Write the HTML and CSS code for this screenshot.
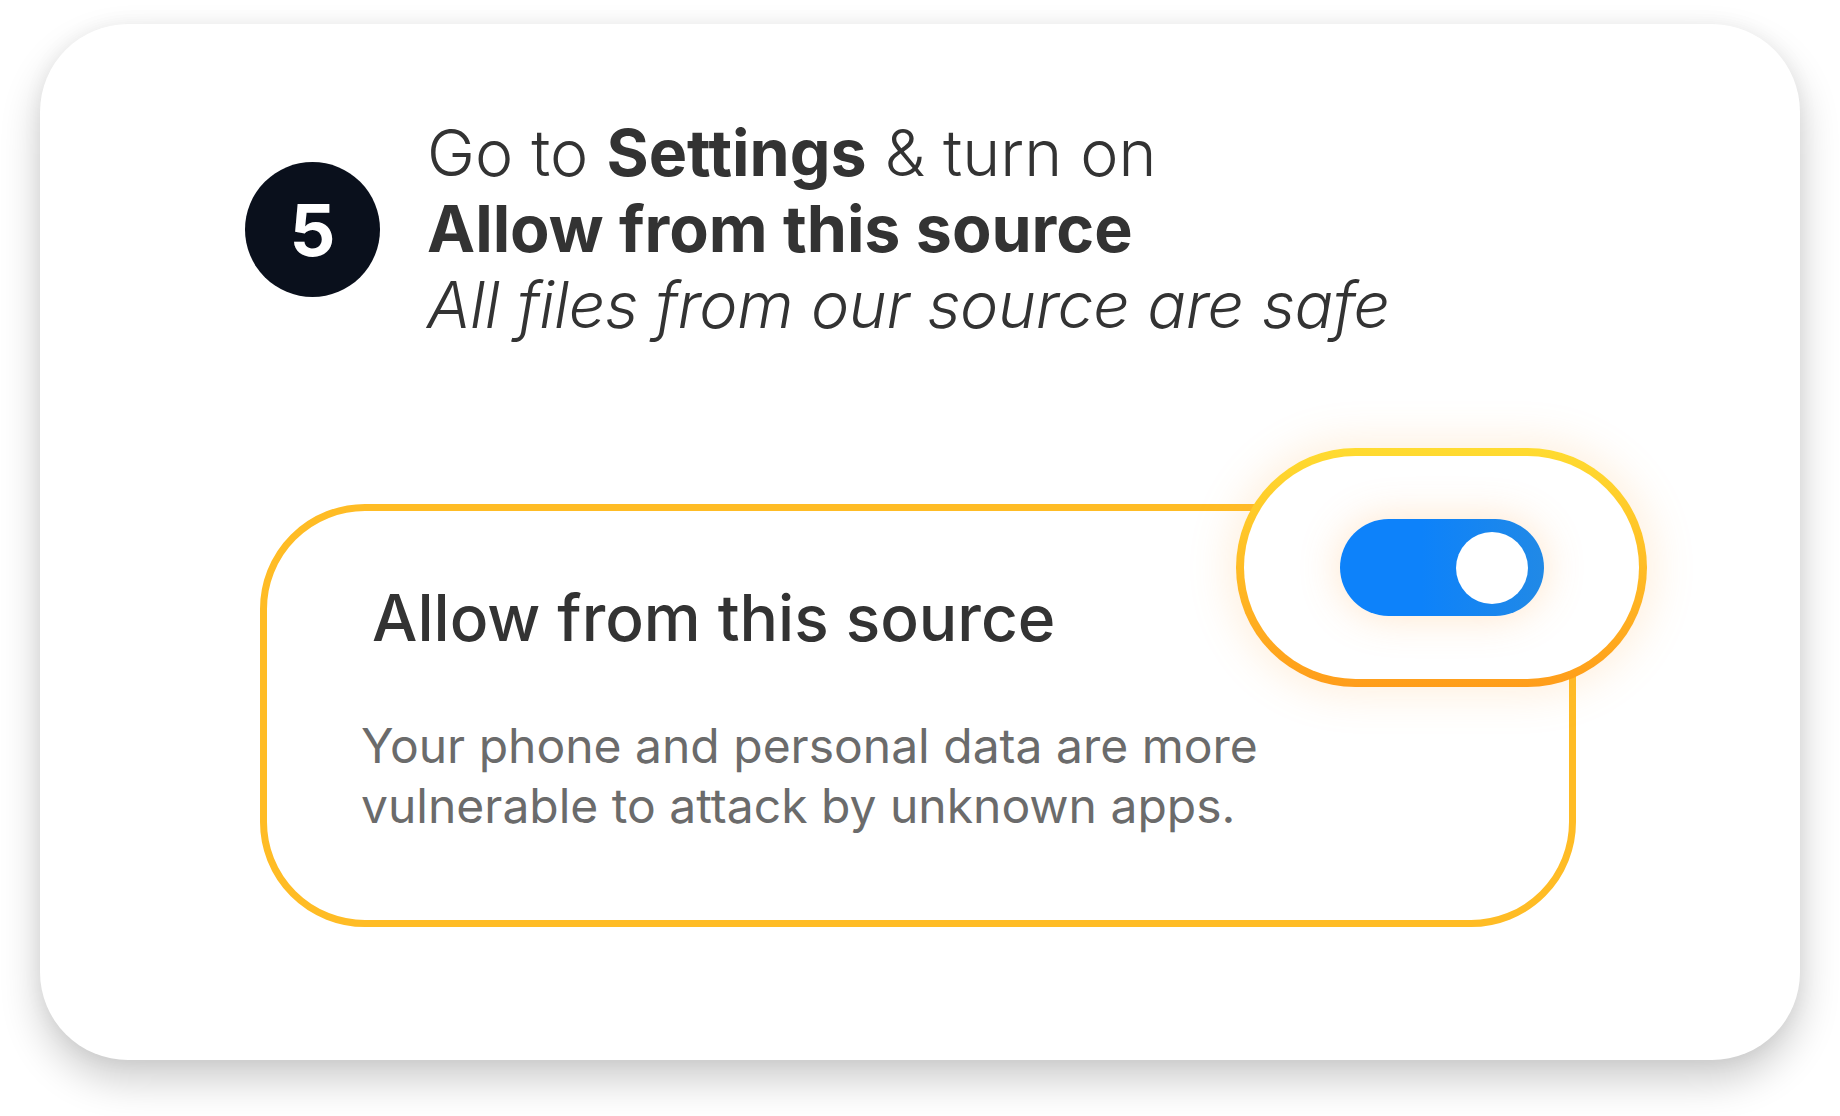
FILE: index.html
```html
<!DOCTYPE html>
<html lang="en">
<head>
  <meta charset="UTF-8" />
  <title>Step 5</title>
  <link rel="stylesheet" href="styles.css">
</head>
<body>
  <div class="card">
    <div class="step">
      <div class="step-num">5</div>
      <div class="step-text">
        <div class="line">Go to <b>Settings</b> &amp; turn on</div>
        <div class="line"><b>Allow from this source</b></div>
        <div class="line note">All files from our source are safe</div>
      </div>
    </div>

    <div class="setting">
      <div class="setting-title">Allow from this source</div>
      <p class="setting-desc">Your phone and personal data are more<br>vulnerable to attack by unknown apps.</p>

      <div class="toggle-wrap">
        <div class="switch">
          <div class="knob"></div>
        </div>
      </div>
    </div>
  </div>
</body>
</html>
```

FILE: styles.css
```css
* {
  box-sizing: border-box;
}

html {
  background: #fff;
}

body {
  margin: 0;
  padding: 24px 0 56px 40px;
  min-height: 1116px;
  font-family: Inter, 'Noto Sans', sans-serif;
  color: #333;
}

.card {
  width: 1760px;
  height: 1036px;
  background: #fff;
  border-radius: 88px;
  box-shadow: 0 20px 40px rgba(0, 0, 0, 0.2), 0 0 20px rgba(0, 0, 0, 0.05);
  padding: 91px 0 0 205px;
}

.step {
  display: flex;
  align-items: center;
  gap: 47px;
}

.step-num {
  width: 135px;
  height: 135px;
  flex-shrink: 0;
  border-radius: 50%;
  background: #0a101c;
  color: #fff;
  font-size: 72px;
  font-weight: 700;
  display: flex;
  align-items: center;
  justify-content: center;
}

.step-text {
  font-size: 64.5px;
  line-height: 76px;
  font-weight: 300;
  color: #333;
}

.step-text b {
  font-weight: 700;
}

.note {
  font-style: italic;
  letter-spacing: -0.35px;
}

.setting {
  position: relative;
  margin: 161px 0 0 15px;
  width: 1316px;
  height: 423px;
  border: 7px solid #ffbc25;
  border-radius: 105px;
  padding: 69px 0 0 94px;
}

.setting-title {
  font-size: 64px;
  line-height: 75px;
  font-weight: 500;
  color: #333;
  padding-left: 11px;
}

.setting-desc {
  margin: 61px 0 0;
  font-size: 48px;
  line-height: 60px;
  color: #6b6b6b;
}

.toggle-wrap {
  position: absolute;
  left: 969px;
  top: -63px;
  width: 411px;
  height: 239px;
  border: 8px solid transparent;
  border-radius: 120px;
  background: linear-gradient(#fff, #fff) padding-box,
              linear-gradient(#ffdb30, #ff9d1a) border-box;
  box-shadow: 0 0 40px 8px rgba(255, 170, 80, 0.18);
  display: flex;
  align-items: center;
  justify-content: center;
}

.switch {
  width: 204px;
  height: 97px;
  border-radius: 49px;
  background: linear-gradient(90deg, #0d82fa 40%, #2189e6);
  box-shadow: 0 0 40px rgba(255, 170, 80, 0.3);
  display: flex;
  align-items: center;
  justify-content: flex-end;
  padding-right: 16px;
}

.knob {
  width: 72px;
  height: 72px;
  border-radius: 50%;
  background: #fff;
}
```
